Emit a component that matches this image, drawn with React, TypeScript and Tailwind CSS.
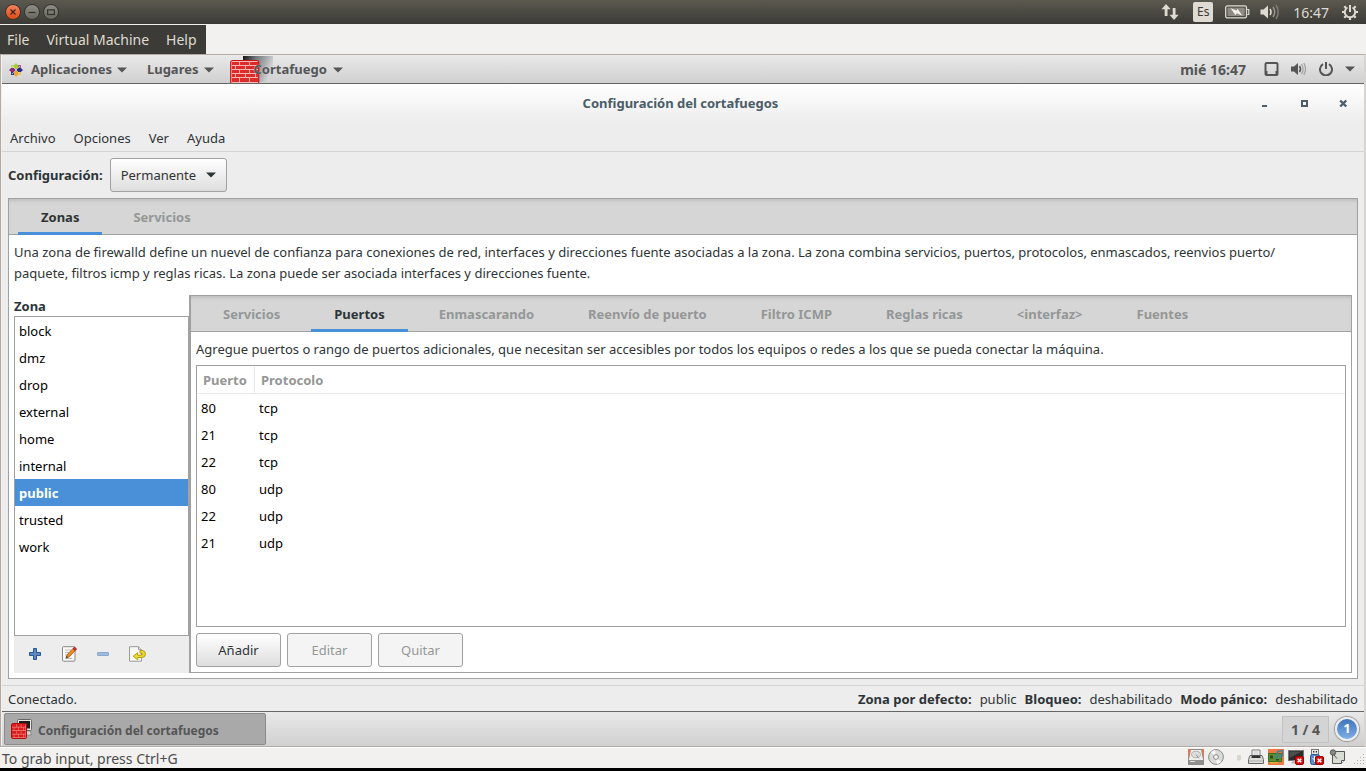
import type { ReactNode } from "react";

const zones = ["block", "dmz", "drop", "external", "home", "internal", "public", "trusted", "work"];
const innerTabs = [
  "Servicios",
  "Puertos",
  "Enmascarando",
  "Reenvío de puerto",
  "Filtro ICMP",
  "Reglas ricas",
  "<interfaz>",
  "Fuentes",
];
const ports = [
  ["80", "tcp"],
  ["21", "tcp"],
  ["22", "tcp"],
  ["80", "udp"],
  ["22", "udp"],
  ["21", "udp"],
];

function Caret({ className = "" }: { className?: string }) {
  return (
    <svg width="10" height="6" viewBox="0 0 10 6" className={"shrink-0 " + className} aria-hidden="true">
      <path d="M0 0.5h10L5 5.5z" fill="currentColor" />
    </svg>
  );
}

function Tab({ label, active }: { label: string; active: boolean }) {
  return (
    <button
      type="button"
      role="tab"
      aria-selected={active}
      className={
        "h-9 shrink-0 border-b-3 px-[23px] pt-1 text-[13px] font-bold whitespace-nowrap " +
        (active ? "border-[#4a90d9] text-[#2e3436]" : "border-transparent text-[#949796]")
      }
    >
      {label}
    </button>
  );
}

function TabBar({ labels, active }: { labels: string[]; active: string }) {
  return (
    <div className="bg-[#d6d6d6] shadow-[inset_0_4px_4px_-3px_#b4b4b4,inset_0_-1px_0_#a1a1a1]">
      <div role="tablist" className="flex gap-2 px-[9px]">
        {labels.map((l) => (
          <Tab key={l} label={l} active={l === active} />
        ))}
      </div>
    </div>
  );
}

function PushButton({ children, disabled = false }: { children: ReactNode; disabled?: boolean }) {
  return (
    <button
      type="button"
      disabled={disabled}
      className={
        "h-[34px] w-[85px] rounded-[3px] border border-[#a1a1a1] pt-[2px] text-[13px] " +
        (disabled ? "bg-[#f4f4f4] text-[#949796]" : "bg-linear-to-b from-white to-[#dedede] text-[#2e3436]")
      }
    >
      {children}
    </button>
  );
}

function DarkWindowButton({ kind }: { kind: "close" | "min" | "max" }) {
  return (
    <button type="button" aria-label={kind} className="block size-4">
      <svg width="16" height="16" viewBox="0 0 16 16">
        <defs>
          <linearGradient id={"wb-" + kind} x1="0" y1="0" x2="0" y2="1">
            <stop offset="0" stopColor={kind === "close" ? "#f58461" : "#908f87"} />
            <stop offset="1" stopColor={kind === "close" ? "#df4a16" : "#66655e"} />
          </linearGradient>
        </defs>
        <circle cx="8" cy="8" r="7.5" fill={"url(#wb-" + kind + ")"} stroke="#33322d" />
        {kind === "close" && <path d="M5.5 5.5l5 5m0-5l-5 5" stroke="#43241a" strokeWidth="1.4" />}
        {kind === "min" && <path d="M4.5 8.5h7" stroke="#33322d" strokeWidth="1.2" />}
        {kind === "max" && <rect x="4.6" y="5.9" width="6.8" height="4.6" fill="none" stroke="#33322d" strokeWidth="1.2" />}
      </svg>
    </button>
  );
}

function Bricks({ size }: { size: number }) {
  return (
    <>
      <rect x="0.5" y="0.5" width={size - 1} height={size - 1} rx="1.5" fill="#f08a84" stroke="#b00d0d" />
      {[0, 1, 2, 3].map((r) => {
        const h = (size - 2) / 4;
        const y = 1 + r * h;
        const w = (size - 2) / 3;
        const xs = r % 2 ? [0, 0.5, 1.5, 2.5] : [0, 1, 2];
        return xs.map((x, i) => {
          const bw = r % 2 && (i === 0 || i === 3) ? w / 2 : w;
          return <rect key={r + "-" + i} x={1 + x * w} y={y} width={bw - 0.5} height={h - 0.7} fill="#dc1c1c" />;
        });
      })}
    </>
  );
}

function HostBar() {
  return (
    <header className="flex h-6 items-center bg-linear-to-b from-[#5b594f] to-[#3c3b37] text-[#dfdbd2]">
      <div className="flex items-center gap-[3px] pl-[5px]">
        <DarkWindowButton kind="close" />
        <DarkWindowButton kind="min" />
        <DarkWindowButton kind="max" />
      </div>
      <div className="ml-auto flex items-center pr-2">
        <svg width="18" height="18" viewBox="0 0 18 18" className="mr-[14px]" fill="#dfdbd2" aria-hidden="true">
          <path d="M5 1L0.5 6.2H3.7V13H6.5V6.2H9.7Z" />
          <path d="M13 17L8.5 11.8H11.7V5H14.5V11.8H17.7Z" />
        </svg>
        <span className="mr-3 flex h-5 w-5 items-center justify-center rounded-xs bg-[#dfdbd2] text-[12px] text-[#3c3b37]">
          Es
        </span>
        <svg width="25" height="14" viewBox="0 0 25 14" className="mr-[10px]" aria-hidden="true">
          <rect x="0.7" y="0.9" width="20.8" height="12" rx="1.6" fill="none" stroke="#dfdbd2" strokeWidth="1.3" />
          <rect x="2.5" y="2.7" width="17.2" height="8.4" fill="#8d8b84" />
          <path d="M22.2 4.5h1.6v5h-1.6" fill="none" stroke="#dfdbd2" strokeWidth="1.2" />
          <path d="M5.5 3.2l6 2.3 1-1.8L17.500 10.800l-5.800-2.500-1.200 2z" fill="#f2efe8" />
        </svg>
        <svg width="20" height="16" viewBox="0 0 20 16" className="mr-[13px]" fill="none" aria-hidden="true">
          <path d="M0.500 5.500h3L8 1.500v13L3.500 10.500h-3z" fill="#dfdbd2" />
          <path d="M10 5q2 3 0 6" stroke="#dfdbd2" strokeWidth="1.600" />
          <path d="M13 3q3.400 5 0 10" stroke="#97958d" strokeWidth="1.500" />
          <path d="M16 1q4.500 7 0 14" stroke="#7c7a72" strokeWidth="1.500" />
        </svg>
        <time className="mr-[13px] text-[14px]">16:47</time>
        <svg width="16" height="16" viewBox="0 0 16 16" fill="none" stroke="#dfdbd2" aria-hidden="true">
          <path d="M5.500 3.500a5.200 5.200 0 1 0 5 0" strokeWidth="1.900" />
          <path d="M8 1v7" strokeWidth="2" />
          <path
            d="M0 8h2.500M13.500 8H16M8 13.500v2.500M2.300 2.300l1.700 1.700M13.700 2.300l-1.700 1.700M2.300 13.700l1.700-1.700M13.700 13.700l-1.700-1.700"
            strokeWidth="2.200"
          />
        </svg>
      </div>
    </header>
  );
}

function AppsIcon() {
  return (
    <svg width="14" height="14" viewBox="0 0 14 14" className="mr-2 shrink-0" aria-hidden="true">
      <path d="M2 2h4.500v4.500H2z" fill="#b8d96a" />
      <path d="M7.500 2H12v4.500H7.500z" fill="#a85a9c" />
      <path d="M2 7.500h4.500V12H2z" fill="#3b3a86" />
      <path d="M7.500 7.500H12V12H7.500z" fill="#e9bd5c" />
      <path d="M7 0l2 2.200v3L7 7 5 5.200v-3z" fill="#a6cf2f" />
      <path d="M7 14l2-2.200v-3L7 7 5 8.800v3z" fill="#eda62c" />
      <path d="M0 7l2.200-2h3L7 7 5.200 9h-3z" fill="#8d2b78" />
      <path d="M14 7l-2.200-2h-3L7 7l1.800 2h3z" fill="#2b2a7d" />
      <path d="M3 3l8 8M11 3l-8 8" stroke="#ececec" strokeWidth="0.600" />
    </svg>
  );
}

function GuestPanel() {
  const item = "flex items-center whitespace-nowrap";
  return (
    <nav className="flex h-[29px] items-center border-b border-[#656565] bg-linear-to-b from-[#e9e9e9] to-[#d0d0d0] text-[13px] font-bold text-[#555555]">
      <button type="button" className={item + " ml-[7px] mr-5 pt-px"}>
        <AppsIcon />
        Aplicaciones
        <Caret className="ml-[5px]" />
      </button>
      <button type="button" className={item + " pt-px"}>
        Lugares
        <Caret className="ml-[5px]" />
      </button>
      <button type="button" className={item + " relative ml-4 h-7 pt-px pl-6"}>
        <svg width="44" height="28" viewBox="0 0 44 28" className="absolute top-0 left-0" aria-hidden="true">
          <defs>
            <linearGradient id="screen-fade" x1="0" x2="1" y1="0" y2="0.300">
              <stop offset="0" stopColor="#111" />
              <stop offset="0.400" stopColor="#6f757c" />
              <stop offset="1" stopColor="#d4d4d4" />
            </linearGradient>
          </defs>
          <rect x="13" y="1" width="30" height="26" fill="url(#screen-fade)" />
          <rect x="0.700" y="5.500" width="28" height="24" rx="2" fill="#f4b9b5" stroke="#c81414" strokeWidth="1.200" />
          <path
            d="M2 7h7v3H2zM10 7h9v3h-9zM20 7h8v3h-8zM2 11h3v3H2zM6 11h9v3H6zM16 11h9v3h-9zM26 11h2v3h-2zM2 15h7v3H2zM10 15h9v3h-9zM20 15h8v3h-8zM2 19h3v3H2zM6 19h9v3H6zM16 19h9v3h-9zM26 19h2v3h-2zM2 23h7v4H2zM10 23h9v4h-9zM20 23h8v4h-8z"
            fill="#e02a2a"
          />
        </svg>
        <span className="relative [text-shadow:0_0_1px_#ddd]">Cortafuego</span>
        <Caret className="ml-[6px]" />
      </button>
      <time className="ml-auto text-[14px]">mié 16:47</time>
      <div className="ml-[18px] flex items-center gap-3 pr-[9px]">
        <svg width="15" height="14" viewBox="0 0 15 14" aria-hidden="true">
          <rect x="1.500" y="1" width="12" height="12" rx="1" fill="none" stroke="#555" strokeWidth="2" />
          <path d="M2 9h1.500v3H2zM11.500 9H13v3h-1.500z" fill="#555" />
        </svg>
        <svg width="16" height="14" viewBox="0 0 16 14" fill="none" aria-hidden="true">
          <path d="M0 4.500h3L7 1v12L3 9.500H0z" fill="#555" />
          <path d="M8.500 4q2 3 0 6" stroke="#555" strokeWidth="1.600" />
          <path d="M10.500 2q3.200 5 0 10M12.800 1q3.500 6 0 12" stroke="#a3a3a3" strokeWidth="1.300" />
        </svg>
        <svg width="14" height="14" viewBox="0 0 14 14" fill="none" stroke="#555" strokeWidth="2" aria-hidden="true">
          <path d="M4 2.200a6 6 0 1 0 6 0M7 0v7" />
        </svg>
        <Caret />
      </div>
    </nav>
  );
}

function ZoneToolbar() {
  return (
    <div className="flex h-[37px] items-center gap-[18px] bg-[#ededed] pb-px pl-[13px]">
      <button type="button" aria-label="Añadir zona">
        <svg width="16" height="16" viewBox="0 0 16 16">
          <path d="M6.500 2.500h3v4h4v3h-4v4h-3v-4h-4v-3h4z" fill="#5c8ac4" stroke="#2c5391" strokeLinejoin="round" />
        </svg>
      </button>
      <button type="button" aria-label="Editar zona">
        <svg width="16" height="16" viewBox="0 0 16 16">
          <rect x="1.500" y="0.700" width="12.500" height="14.500" rx="1" fill="#fafafa" stroke="#888a85" />
          <path d="M4 4h6M4 6.500h4M4 9h3M4 12.500h7" stroke="#bcbcb8" />
          <path d="M5 12l1-3 6-6.500 2.200 2L8 11z" fill="#f08a28" stroke="#a65208" strokeWidth="0.800" />
          <path d="M12 2.500L13.500 1l2.200 2-1.500 1.500z" fill="#d42b2b" stroke="#9b1010" strokeWidth="0.600" />
          <path d="M5 12l0.700-2 1.400 1.300z" fill="#333" />
        </svg>
      </button>
      <button type="button" aria-label="Quitar zona" disabled>
        <svg width="16" height="16" viewBox="0 0 16 16">
          <rect x="2.500" y="6.500" width="11" height="3" rx="0.500" fill="#9fbbe0" stroke="#8aa6cc" />
        </svg>
      </button>
      <button type="button" aria-label="Restaurar zona">
        <svg width="17" height="16" viewBox="0 0 17 16">
          <path d="M0.500 0.700h9l3 3v11.500h-12z" fill="#f8f8f6" stroke="#9a9c98" />
          <path d="M9.500 0.700v3h3" fill="#e4e4e0" stroke="#9a9c98" />
          <path
            d="M11 4.500h2a3.300 3.300 0 0 1 0 7H8.700v2.300L4.200 10.300l4.500-3.600v2.400h3.600q1 0 1-1t-1-1H11z"
            fill="#edd733"
            stroke="#b19a00"
            strokeWidth="0.900"
          />
        </svg>
      </button>
    </div>
  );
}

function ErrorMark() {
  return (
    <>
      <rect x="7.500" y="7.500" width="8" height="8" rx="1.500" fill="#d40f0f" stroke="#900" />
      <path d="M9.700 9.700l3.600 3.600m0-3.600l-3.600 3.600" stroke="#fff" strokeWidth="1.500" />
    </>
  );
}

function DeviceIcons() {
  return (
    <div className="flex items-center gap-1 pr-px pb-[2px]" aria-hidden="true">
      <svg width="16" height="16" viewBox="0 0 16 16">
        <rect width="16" height="16" fill="#ef7847" />
        <path d="M2.500 0.500h11l2 10v5H.5v-5z" fill="#eeeeec" stroke="#8a8a88" />
        <ellipse cx="8" cy="5.500" rx="4.500" ry="3.200" fill="#dededb" stroke="#a5a5a2" strokeWidth="0.800" />
        <path d="M8 5.500l3 4" stroke="#999" />
        <path d="M1 11h14v4H1z" fill="#8f8f8c" />
        <path d="M2 12.500h5" stroke="#ddd" />
      </svg>
      <svg width="16" height="16" viewBox="0 0 16 16">
        <circle cx="8" cy="8" r="7.400" fill="#dadad8" stroke="#8b8b89" />
        <path d="M8 8L3 3a7 7 0 0 1 4-2zM8 8l5 5a7 7 0 0 1-4 2z" fill="#fafafa" />
        <circle cx="8" cy="8" r="2.400" fill="#f4f4f4" stroke="#888" />
      </svg>
      <svg width="16" height="16" viewBox="0 0 16 16">
        <rect x="9" y="6" width="4" height="5.500" rx="1" fill="#d8d6cf" />
      </svg>
      <svg width="16" height="16" viewBox="0 0 16 16">
        <path d="M4 7V1h8v6" fill="#fff" stroke="#777" />
        <path d="M5.500 3h5M5.500 5h5" stroke="#bbb" />
        <path d="M2 6.500h12l1.500 4v4H.5v-4z" fill="#dcdcd9" stroke="#666" />
        <path d="M4 6.500h8l0.700 2.500H3.300z" fill="#333" />
        <path d="M1 12h14" stroke="#aaa" />
      </svg>
      <svg width="16" height="16" viewBox="0 0 16 16">
        <rect width="16" height="16" fill="#ef7847" />
        <path d="M0.500 4.500h13v8H.5z" fill="#5d8f35" stroke="#3f6f1c" />
        <path d="M2 6.500h3v3H2zM8 10h3v1.500H8z" fill="#2f4a1a" />
        <path d="M2 13h8v1.500H2z" fill="#d7b13c" />
        <path d="M9.500 8V2.500l5-1v5.500" fill="none" stroke="#3f7f9f" strokeWidth="1.400" />
        <circle cx="8.500" cy="8" r="1.500" fill="#3f7f9f" />
        <circle cx="13.500" cy="7" r="1.500" fill="#3f7f9f" />
      </svg>
      <svg width="16" height="16" viewBox="0 0 16 16">
        <rect x="0.500" y="1.500" width="15" height="10" fill="#2b2d2c" stroke="#777" />
        <path d="M1.500 2.500h12L1.500 9z" fill="#4b4e4c" />
        <path d="M3 14.500h6l-1-3H5z" fill="#b5b5b2" />
        <ErrorMark />
      </svg>
      <svg width="16" height="16" viewBox="0 0 16 16">
        <rect x="3.500" y="0.500" width="7" height="5" fill="#e6e6e3" stroke="#777" />
        <path d="M5 2h1.300v1.500H5zM7.700 2H9v1.500H7.700z" fill="#333" />
        <rect x="2.500" y="5.500" width="9" height="10" rx="2" fill="#5b8cc9" stroke="#2b5491" />
        <path d="M6.500 7v6M4.500 9l2 2 2-2" stroke="#fff" fill="none" />
        <ErrorMark />
      </svg>
      <svg width="17" height="16" viewBox="0 0 17 16">
        <path d="M4.500 2.500h12v9l-3 3h-9z" fill="#d9dcd3" stroke="#555753" />
        <path d="M13.500 14.500v-3h3" fill="#fff" stroke="#555753" />
        <circle cx="5" cy="3.500" r="2.700" fill="#888a85" stroke="#555753" />
        <path d="M6 6l3 3.500" stroke="#555753" />
      </svg>
      <svg width="12" height="12" viewBox="0 0 12 12" className="ml-1 self-end" fill="#b0aca6">
        <path d="M10 1h1v1h-1zM7 4h1v1H7zM10 4h1v1h-1zM4 7h1v1H4zM7 7h1v1H7zM10 7h1v1h-1zM1 10h1v1H1zM4 10h1v1H4zM7 10h1v1H7zM10 10h1v1h-1z" />
      </svg>
    </div>
  );
}

function FirewallWindow() {
  return (
    <section className="flex grow flex-col bg-[#ededed] text-[13px] text-[#2e3436]">
      <div className="flex h-[39px] items-center bg-linear-to-b from-white to-[#ededed] pt-px">
        <h1 className="grow pl-[102px] text-center font-bold text-[#4a5d68]">Configuración del cortafuegos</h1>
        <div className="flex gap-[23px] pr-[13px]">
          <button type="button" aria-label="Minimizar">
            <svg width="16" height="16" viewBox="0 0 16 16">
              <path d="M5 9h5v2H5z" fill="#4a5d68" />
            </svg>
          </button>
          <button type="button" aria-label="Maximizar">
            <svg width="16" height="16" viewBox="0 0 16 16">
              <path d="M5 4h7v7H5zM7 6v3h3V6z" fill="#4a5d68" fillRule="evenodd" />
            </svg>
          </button>
          <button type="button" aria-label="Cerrar">
            <svg width="16" height="16" viewBox="0 0 16 16">
              <path d="M5.200 4.500l6 6m0-6l-6 6" stroke="#4a5d68" strokeWidth="2.400" />
            </svg>
          </button>
        </div>
      </div>
      <nav className="flex h-[29px] items-center gap-[18px] border-b border-[#d4d4d4] px-2 pt-1">
        <button type="button">Archivo</button>
        <button type="button">Opciones</button>
        <button type="button">Ver</button>
        <button type="button">Ayuda</button>
      </nav>
      <div className="flex h-[46px] items-center gap-[7px] px-[6px]">
        <label htmlFor="mode" className="pt-[2px] font-bold">
          Configuración:
        </label>
        <span className="relative">
          <select
            id="mode"
            className="block h-[34px] w-[117px] appearance-none rounded-[3px] border border-[#a1a1a1] bg-linear-to-b from-white to-[#dedede] pt-[2px] pl-[10px]"
          >
            <option>Permanente</option>
            <option>Tiempo de ejecución</option>
          </select>
          <Caret className="pointer-events-none absolute top-[14px] right-[11px]" />
        </span>
      </div>
      <div className="mx-[6px] flex grow flex-col border border-[#a1a1a1] bg-white">
        <TabBar labels={["Zonas", "Servicios"]} active="Zonas" />
        <p className="mx-[5px] mt-[7px] mb-[11px] leading-[21px]">
          Una zona de firewalld define un nuevel de confianza para conexiones de red, interfaces y direcciones fuente
          asociadas a la zona. La zona combina servicios, puertos, protocolos, enmascados, reenvios puerto/
          <br />
          paquete, filtros icmp y reglas ricas. La zona puede ser asociada interfaces y direcciones fuente.
        </p>
        <div className="mx-[5px] mb-[5px] flex grow">
          <div className="flex w-[175px] shrink-0 flex-col">
            <h2 className="h-[21px] font-bold leading-[22px]">Zona</h2>
            <ul role="listbox" aria-label="Zona" className="grow border border-[#a1a1a1] text-black">
              {zones.map((z) => (
                <li
                  key={z}
                  role="option"
                  aria-selected={z === "public"}
                  className={
                    "h-[27px] px-1 leading-[28px] " + (z === "public" ? "bg-[#4a90d9] font-bold text-white" : "")
                  }
                >
                  {z}
                </li>
              ))}
            </ul>
            <ZoneToolbar />
          </div>
          <div className="flex grow flex-col border border-l-2 border-[#a1a1a1]">
            <TabBar labels={innerTabs} active="Puertos" />
            <div className="flex grow flex-col px-[5px] pt-[7px] pb-[5px]">
              <p className="mb-[5px] leading-[21px]">
                Agregue puertos o rango de puertos adicionales, que necesitan ser accesibles por todos los equipos o
                redes a los que se pueda conectar la máquina.
              </p>
              <div className="mb-[6px] grow border border-[#a1a1a1]">
                <table className="w-full table-fixed border-separate border-spacing-0 text-left text-black">
                  <thead>
                    <tr className="text-[#949796]">
                      <th className="h-7 w-[58px] border-r border-b border-[#ebebeb] p-0 pt-[2px] pl-[6px]">Puerto</th>
                      <th className="h-7 border-b border-[#ebebeb] p-0 pt-[2px] pl-[6px]">Protocolo</th>
                    </tr>
                  </thead>
                  <tbody>
                    {ports.map(([port, proto]) => (
                      <tr key={port + proto}>
                        <td className="h-[27px] p-0 pt-[3px] pl-1">{port}</td>
                        <td className="h-[27px] p-0 pt-[3px] pl-1">{proto}</td>
                      </tr>
                    ))}
                  </tbody>
                </table>
              </div>
              <div className="flex gap-[6px]">
                <PushButton>Añadir</PushButton>
                <PushButton disabled>Editar</PushButton>
                <PushButton disabled>Quitar</PushButton>
              </div>
            </div>
          </div>
        </div>
      </div>
      <footer className="mt-[6px] flex h-[26px] items-center justify-between border-t border-[#d4d4d4] px-[6px] pt-[2px]">
        <span>Conectado.</span>
        <dl className="flex gap-2">
          <dt className="font-bold">Zona por defecto:</dt>
          <dd>public</dd>
          <dt className="font-bold">Bloqueo:</dt>
          <dd>deshabilitado</dd>
          <dt className="font-bold">Modo pánico:</dt>
          <dd>deshabilitado</dd>
        </dl>
      </footer>
    </section>
  );
}

function Taskbar() {
  return (
    <div className="flex h-[35px] items-center border-t border-[#656565] bg-linear-to-b from-[#e9e9e9] to-[#d0d0d0] px-[2px] font-bold text-[#555555]">
      <button
        type="button"
        className="flex h-8 w-[262px] items-center gap-[6px] rounded-xs border border-[#8a8a8a] bg-[#a9a9a9] pl-[6px] text-[12px]"
      >
        <svg width="21" height="20" viewBox="0 0 21 20" aria-hidden="true">
          <rect x="6.500" y="0.500" width="14" height="11" rx="1" fill="#e8e8e4" stroke="#666" />
          <rect x="8" y="2" width="11" height="7.500" fill="#1b1d1e" />
          <path d="M14 12h5l1.500 4H14z" fill="#d8d8d4" stroke="#777" strokeWidth="0.700" />
          <g transform="translate(0 4)">
            <Bricks size={16} />
          </g>
        </svg>
        <span className="pt-[3px]">Configuración del cortafuegos</span>
      </button>
      <span className="mr-[6px] ml-auto flex h-[27px] w-[47px] items-center justify-center border border-[#c2c2c2] bg-[#d4d4d4] text-[14px]">
        1 / 4
      </span>
      <span className="mr-[3px] flex size-6 items-center justify-center rounded-full border-2 border-[#eeeeee] bg-linear-to-b from-[#3f74bb] to-[#7eb0e6] text-[13px] text-white shadow-[0_0_1px_1px_#999]">
        1
      </span>
    </div>
  );
}

export default function App() {
  return (
    <div className="flex min-h-screen flex-col bg-[#f2f1f0] font-['Noto_Sans','Open_Sans',sans-serif]">
      <HostBar />
      <nav className="flex h-[30px] pt-px">
        <div className="flex w-[206px] items-center gap-[17px] bg-[#3c3b37] pl-[7px] text-[14px] whitespace-nowrap text-[#dfdbd2]">
          <button type="button">File</button>
          <button type="button">Virtual Machine</button>
          <button type="button">Help</button>
        </div>
      </nav>
      <main className="flex grow flex-col border border-r-2 border-[#b3aaa4] border-r-[#d8d4d0] pl-px">
        <GuestPanel />
        <FirewallWindow />
        <Taskbar />
      </main>
      <footer className="flex h-[21px] items-center justify-between border-t border-white pl-[2px] text-[14px] text-[#4c4c4c]">
        <span>To grab input, press Ctrl+G</span>
        <DeviceIcons />
      </footer>
      <div className="h-[3px] bg-black" />
    </div>
  );
}
